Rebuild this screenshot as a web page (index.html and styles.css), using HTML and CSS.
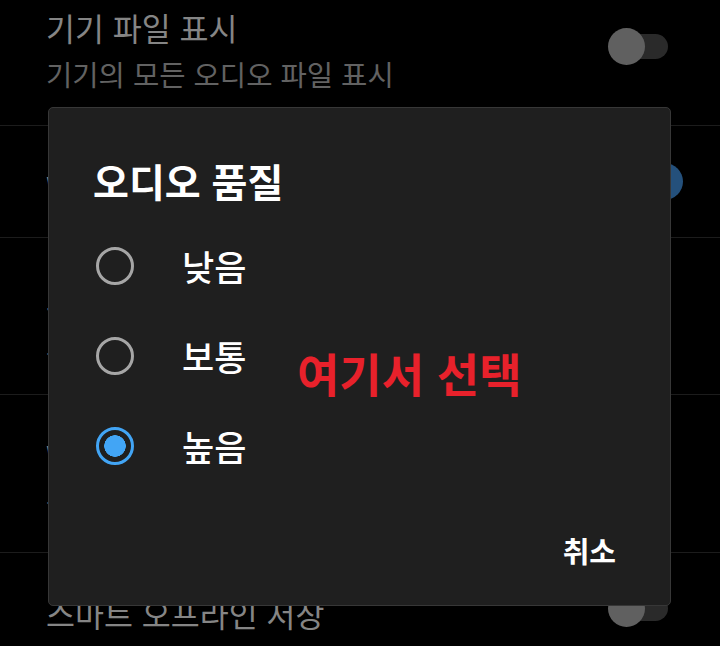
FILE: index.html
```html
<!DOCTYPE html>
<html lang="ko">
<head>
<meta charset="utf-8">
<title>설정</title>
<link rel="stylesheet" href="styles.css">
</head>
<body>
<div class="screen">
  <ul class="settings">
    <li class="row row-first">
      <div class="texts">
        <p class="title">기기 파일 표시</p>
        <p class="sub">기기의 모든 오디오 파일 표시</p>
      </div>
      <span class="switch"><span class="track"></span><span class="knob"></span></span>
    </li>
    <li class="row row-single">
      <div class="texts">
        <p class="title">Wi-Fi에서만 스트리밍</p>
      </div>
      <span class="switch on"><span class="track"></span><span class="knob"></span></span>
    </li>
    <li class="row row-tall">
      <div class="texts">
        <p class="title">모바일 네트워크 오디오 품질</p>
        <p class="sub">보통</p>
      </div>
    </li>
    <li class="row row-tall2">
      <div class="texts">
        <p class="title">Wi-Fi 오디오 품질</p>
        <p class="sub">높음</p>
      </div>
    </li>
    <li class="row row-last">
      <div class="texts">
        <p class="title">스마트 오프라인 저장</p>
      </div>
      <span class="switch"><span class="track"></span><span class="knob"></span></span>
    </li>
  </ul>

  <div class="dialog" role="dialog" aria-labelledby="dlg-title">
    <h2 class="dialog-title" id="dlg-title">오디오 품질</h2>
    <ul class="options">
      <li class="option"><span class="radio"></span><span class="label">낮음</span></li>
      <li class="option"><span class="radio"></span><span class="label">보통</span></li>
      <li class="option"><span class="radio checked"></span><span class="label">높음</span></li>
    </ul>
    <div class="actions"><button class="btn" type="button">취소</button></div>
    <p class="note">여기서 선택</p>
  </div>
</div>
</body>
</html>
```
FILE: styles.css
```css
* { box-sizing: border-box; }

html, body {
  margin: 0;
  padding: 0;
  background: #000;
}

body {
  font-family: "Noto Sans CJK KR", "Noto Sans", sans-serif;
  color: #fff;
}

.screen {
  position: relative;
  width: 720px;
  height: 646px;
  overflow: hidden;
  background: #000;
}

/* settings list behind the dialog */
.settings {
  list-style: none;
  margin: -33px 0 0;
  padding: 0;
}

.row {
  display: flex;
  align-items: center;
  padding: 0 52px 0 46px;
  border-bottom: 1px solid #1c1c1c;
}

.row-first { height: 159px; }
.row-single { height: 112px; }
.row-tall { height: 157px; }
.row-tall2 { height: 158px; }
.row-last { height: 110px; border-bottom: 0; }

.texts {
  flex: 1;
  padding-top: 9px;
}

.title {
  margin: 0;
  font-size: 31.5px;
  line-height: 44px;
  color: #858585;
}

.sub {
  margin: 3px 0 0;
  font-size: 28.6px;
  line-height: 44px;
  color: #626262;
}

/* toggle switch */
.switch {
  position: relative;
  flex: none;
  width: 60px;
  height: 37px;
}

.switch .track {
  position: absolute;
  left: 4px;
  right: 0;
  top: 6px;
  height: 25px;
  border-radius: 13px;
  background: #2a2a2a;
}

.switch .knob {
  position: absolute;
  left: 0;
  top: 0;
  width: 37px;
  height: 37px;
  border-radius: 50%;
  background: #606060;
}

.switch.on .track { background: #1a344d; }
.switch.on .knob {
  background: #24507b;
  transform: translateX(38px);
}

/* dialog */
.dialog {
  position: absolute;
  left: 48px;
  top: 107px;
  width: 623px;
  height: 499px;
  display: flex;
  flex-direction: column;
  padding: 52px 44px 35px;
  background: #1f1f1f;
  border: 1px solid #373737;
  border-radius: 5px;
}

.dialog-title {
  margin: 0;
  font-size: 39px;
  line-height: 40px;
  font-weight: 700;
  color: #fff;
}

.options {
  list-style: none;
  margin: 21px 0 0;
  padding: 0;
}

.option {
  display: flex;
  align-items: center;
  height: 90px;
}

.radio {
  flex: none;
  width: 38px;
  height: 38px;
  margin-left: 3px;
  border: 3px solid #a6a6a6;
  border-radius: 50%;
}

.radio.checked {
  border: 3.5px solid #42a5f5;
  background: radial-gradient(circle, #42a5f5 0 10.5px, transparent 11px);
}

.label {
  margin-left: 48px;
  font-size: 35px;
  line-height: 40px;
  font-weight: 500;
  color: #fff;
}

.actions {
  margin-top: auto;
  display: flex;
  justify-content: flex-end;
}

.btn {
  padding: 0 10px;
  border: 0;
  background: none;
  font-family: inherit;
  font-size: 29px;
  line-height: 40px;
  font-weight: 700;
  color: #fff;
}

/* red callout over the dialog */
.note {
  position: absolute;
  left: 248px;
  top: 239px;
  margin: 0;
  font-size: 46px;
  line-height: 50px;
  font-weight: 700;
  color: #e8212b;
}
```
